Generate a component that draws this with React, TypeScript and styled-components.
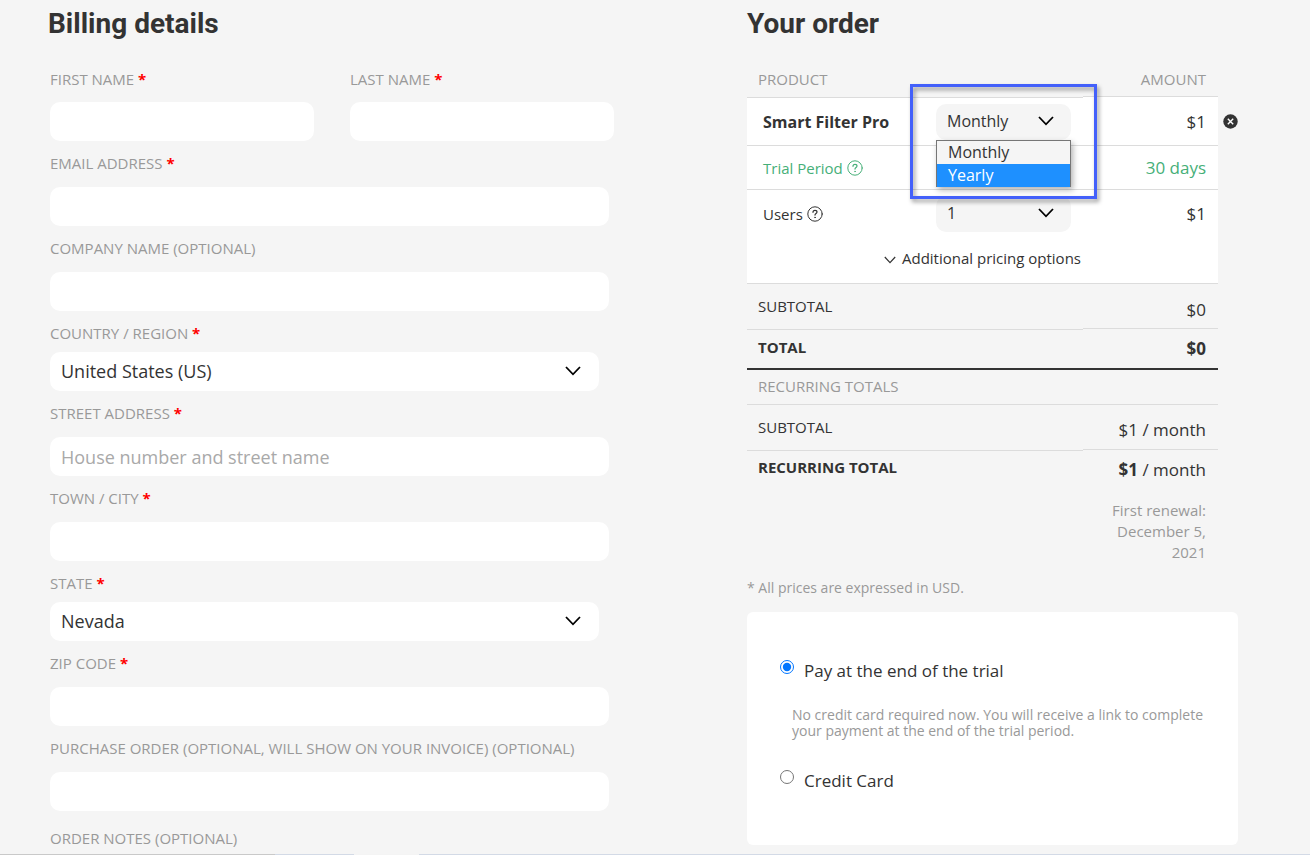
import React, { useState } from "react";
import styled, { createGlobalStyle, css } from "styled-components";

const GlobalStyle = createGlobalStyle`
  *, *::before, *::after { box-sizing: border-box; }
  html { scrollbar-width: none; }
  body {
    margin: 0;
    background: #f5f5f5;
    color: #333;
    font-family: "Open Sans", sans-serif;
    font-size: 17px;
  }
  input, select, textarea, button { font-family: inherit; color: inherit; }
`;

const LINE = "#dcdcdc";
const GREEN = "#46af78";

const Page = styled.form`
  display: grid;
  grid-template-columns: minmax(0, 566fr) minmax(0, 491fr);
  column-gap: 133px;
  padding: 4px 72px 40px 48px;
`;

const Heading = styled.h2`
  margin: 0 0 24px;
  font: 700 28px/39px Roboto, sans-serif;
`;

const Fields = styled.div`
  display: flex;
  flex-direction: column;
  gap: 10px;
  padding-left: 2px;
`;

const NameRow = styled.div`
  display: grid;
  grid-template-columns: 1fr 1fr;
  gap: 36px;
`;

const FieldBox = styled.div<{ $inset?: number; $gap?: number; $before?: number }>`
  display: flex;
  flex-direction: column;
  gap: ${(p) => p.$gap ?? 12}px;
  margin-right: ${(p) => p.$inset ?? 0}px;
  margin-top: ${(p) => p.$before ?? 0}px;
`;

const Label = styled.label`
  color: #999;
  font-size: 15px;
  line-height: 24px;
  text-transform: uppercase;
`;

const Required = styled.abbr`
  color: #f00;
  font-weight: 700;
  text-decoration: none;
`;

const control = css`
  display: block;
  width: 100%;
  height: 39px;
  padding: 0 11px;
  border: 0;
  border-radius: 10px;
  background: #fff;
  font-size: 18px;
  outline: none;
`;

const TextInput = styled.input`
  ${control}
  &::placeholder { color: #a9a9a9; opacity: 1; }
`;

const Notes = styled.textarea`
  ${control}
  height: 80px;
  resize: none;
`;

const SelectWrap = styled.div<{ $arrow: number }>`
  position: relative;
  > svg {
    position: absolute;
    right: ${(p) => p.$arrow}px;
    top: 50%;
    margin-top: -6px;
    pointer-events: none;
  }
`;

const Select = styled.select`
  ${control}
  padding-bottom: 2px;
  appearance: none;
`;

const SmallSelect = styled(Select)`
  height: 36px;
  background: #f5f5f5;
  font-size: 16px;
`;

const Chevron = () => (
  <svg width="16" height="10" viewBox="0 0 16 10" fill="none" stroke="#000" strokeWidth="1.8">
    <path d="M1 1l7 7.3L15 1" />
  </svg>
);

const HelpIcon = () => (
  <svg width="16" height="16" viewBox="0 0 16 16" fill="none" stroke="currentColor" strokeLinecap="round">
    <circle cx="8" cy="8" r="7.2" strokeWidth="1" />
    <path d="M6 6.3c0-1.2.8-1.9 2-1.9s2 .7 2 1.7c0 1.4-2 1.5-2 3" strokeWidth="1.2" />
    <circle cx="8" cy="11.4" r=".5" fill="currentColor" strokeWidth=".5" />
  </svg>
);

const Order = styled.table`
  width: calc(100% - 20px);
  table-layout: fixed;
  border-collapse: separate;
  border-spacing: 0;
`;

const Cell = styled.td<{ $h: number; $top: number; $line?: "thin" | "thick" | "raised" | "raisedWhite" }>`
  height: ${(p) => p.$h}px;
  padding: ${(p) => p.$top}px 0 0 11px;
  line-height: 24px;
  vertical-align: top;
  text-align: left;
  font-weight: 400;
  ${(p) => p.$line === "thin" && css`border-bottom: 1px solid ${LINE};`}
  ${(p) => p.$line === "thick" && css`border-bottom: 2px solid #333;`}
  ${(p) =>
    (p.$line === "raised" || p.$line === "raisedWhite") &&
    css`
      border-bottom: 1px solid ${p.$line === "raised" ? "#f5f5f5" : "#fff"};
      box-shadow: inset 0 -1px ${LINE};
    `}
`;

const Caption = styled(Cell)<{ $muted?: boolean; $bold?: boolean }>`
  color: ${(p) => (p.$muted ? "#999" : "#333")};
  font-weight: ${(p) => (p.$bold ? 700 : 400)};
  font-size: 15px;
  text-transform: uppercase;
`;

const Amount = styled(Cell)<{ $green?: boolean; $small?: boolean }>`
  position: relative;
  padding-left: 0;
  padding-right: 12px;
  text-align: right;
  color: ${(p) => (p.$small ? "#999" : p.$green ? GREEN : "#333")};
  font-size: ${(p) => (p.$small ? 15 : 17)}px;
`;

const ItemBody = styled.tbody`
  background: #fff;
`;

const ItemName = styled(Cell)<{ $green?: boolean; $bold?: boolean }>`
  padding-left: 16px;
  color: ${(p) => (p.$green ? GREEN : "#333")};
  font-size: ${(p) => (p.$bold ? 16 : 15)}px;
  font-weight: ${(p) => (p.$bold ? 700 : 400)};
`;

const WithIcon = styled.span`
  display: inline-flex;
  align-items: center;
  gap: 4px;
`;

const Choice = styled(Cell)`
  position: relative;
  padding-left: 0;
  padding-right: 12px;
`;

const Options = styled.ul`
  position: absolute;
  z-index: 2;
  left: 0;
  right: 12px;
  top: 42px;
  margin: 0;
  padding: 0;
  list-style: none;
  border: 1px solid #767676;
  border-bottom: 0;
  background: #f5f5f5;
  font-size: 16px;
  box-shadow: 2px 3px 6px rgba(0, 0, 0, 0.3);
`;

const Option = styled.li<{ $active?: boolean }>`
  padding-left: 11px;
  line-height: 23px;
  ${(p) => p.$active && css`background: #1e90ff; color: #fff;`}
`;

const Highlight = styled.div`
  position: absolute;
  z-index: 3;
  left: -26px;
  right: -14px;
  top: -14px;
  height: 115px;
  border: 3px solid #4360fa;
  filter: drop-shadow(2px 3px 2px rgba(0, 0, 0, 0.4));
  pointer-events: none;
`;

const Remove = styled.button`
  position: absolute;
  right: -20px;
  top: 16px;
  width: 15px;
  height: 15px;
  padding: 0;
  border: 0;
  background: none;
  cursor: pointer;
  svg { display: block; }
`;

const MoreCell = styled(Cell)`
  padding-left: 0;
  text-align: center;
`;

const MoreButton = styled.button`
  display: inline-flex;
  align-items: center;
  gap: 6px;
  padding: 0;
  border: 0;
  background: none;
  font-size: 15px;
  line-height: 24px;
  svg { margin-top: 4px; }
`;

const Renewal = styled.small`
  display: block;
  margin-top: 18px;
  color: #999;
  font-size: 15px;
  line-height: 21px;
`;

const PriceNote = styled.p`
  margin: 10px 0 12px;
  color: #999;
  font-size: 14px;
  line-height: 24px;
`;

const Payment = styled.div`
  padding: 47px 33px 52px;
  border-radius: 6px;
  background: #fff;
`;

const RadioRow = styled.label`
  display: flex;
  align-items: flex-start;
  gap: 10px;
  line-height: 24px;
  input { margin: 1px 0 0; width: 14px; height: 14px; accent-color: #0075ff; }
`;

const PayNote = styled.p`
  margin: 24px 0 30px 12px;
  color: #999;
  font-size: 14px;
  line-height: 16px;
`;

const Edge = styled.div`
  position: fixed;
  left: 0;
  right: 0;
  bottom: 0;
  height: 1px;
  background: linear-gradient(90deg, #c9c9c9 0 21%, #d3dae6 21% 27%, #f4f4f4 27% 32%, #d3dae6 32%);
`;

type FieldProps = {
  id: string;
  label: string;
  required?: boolean;
  inset?: number;
  gap?: number;
  placeholder?: string;
};

function FieldLabel({ id, label, required }: FieldProps) {
  return (
    <Label htmlFor={id}>
      {label} {required && <Required>*</Required>}
    </Label>
  );
}

function TextField(props: FieldProps) {
  return (
    <FieldBox $inset={props.inset ?? 5} $gap={props.gap}>
      <FieldLabel {...props} />
      <TextInput id={props.id} placeholder={props.placeholder} />
    </FieldBox>
  );
}

function SelectField({ value, ...props }: FieldProps & { value: string }) {
  return (
    <FieldBox $inset={15} $gap={7}>
      <FieldLabel {...props} />
      <SelectWrap $arrow={18}>
        <Select id={props.id} defaultValue={value}>
          <option>{value}</option>
        </Select>
        <Chevron />
      </SelectWrap>
    </FieldBox>
  );
}

export default function App() {
  const [pay, setPay] = useState("trial");
  return (
    <>
      <GlobalStyle />
      <Page>
        <section>
          <Heading>Billing details</Heading>
          <Fields>
            <NameRow>
              <TextField id="first" label="First name" required inset={0} gap={11} />
              <TextField id="last" label="Last name" required inset={0} gap={11} />
            </NameRow>
            <TextField id="email" label="Email address" required />
            <TextField id="company" label="Company name (optional)" />
            <SelectField id="country" label="Country / Region" required value="United States (US)" />
            <TextField id="street" label="Street address" required placeholder="House number and street name" />
            <TextField id="city" label="Town / City" required />
            <SelectField id="state" label="State" required value="Nevada" />
            <TextField id="zip" label="ZIP Code" required />
            <TextField id="po" label="Purchase order (optional, will show on your invoice) (optional)" />
            <FieldBox $inset={5} $before={5}>
              <FieldLabel id="notes" label="Order notes (optional)" />
              <Notes id="notes" />
            </FieldBox>
          </Fields>
        </section>

        <section>
          <Heading>Your order</Heading>
          <Order>
            <colgroup>
              <col />
              <col style={{ width: 147 }} />
              <col style={{ width: 135 }} />
            </colgroup>
            <thead>
              <tr>
                <Caption as="th" colSpan={2} $h={31} $top={0} $line="thin" $muted>Product</Caption>
                <Amount as="th" $h={31} $top={0} $line="raisedWhite" $small>AMOUNT</Amount>
              </tr>
            </thead>
            <ItemBody>
              <tr>
                <ItemName $h={48} $top={12} $line="thin" $bold>Smart Filter Pro</ItemName>
                <Choice $h={48} $top={6} $line="thin">
                  <SelectWrap $arrow={17}>
                    <SmallSelect aria-label="Billing period" defaultValue="Monthly">
                      <option>Monthly</option>
                      <option>Yearly</option>
                    </SmallSelect>
                    <Chevron />
                  </SelectWrap>
                  <Options role="listbox">
                    <Option role="option">Monthly</Option>
                    <Option role="option" $active>Yearly</Option>
                  </Options>
                  <Highlight />
                </Choice>
                <Amount $h={48} $top={12} $line="thin">
                  $1
                  <Remove type="button" aria-label="Remove item">
                    <svg width="15" height="15" viewBox="0 0 15 15">
                      <circle cx="7.5" cy="7.5" r="7.2" fill="#333" />
                      <path d="M4.8 4.8l5.4 5.4M10.2 4.8l-5.4 5.4" stroke="#fff" strokeWidth="1.4" />
                    </svg>
                  </Remove>
                </Amount>
              </tr>
              <tr>
                <ItemName $h={44} $top={10} $line="thin" $green>
                  <WithIcon>Trial Period <HelpIcon /></WithIcon>
                </ItemName>
                <Cell $h={44} $top={10} $line="thin" />
                <Amount $h={44} $top={10} $line="thin" $green>30 days</Amount>
              </tr>
              <tr>
                <ItemName $h={47} $top={12}>
                  <WithIcon>Users <HelpIcon /></WithIcon>
                </ItemName>
                <Choice $h={47} $top={6}>
                  <SelectWrap $arrow={17}>
                    <SmallSelect aria-label="Users" defaultValue="1">
                      <option>1</option>
                    </SmallSelect>
                    <Chevron />
                  </SelectWrap>
                </Choice>
                <Amount $h={47} $top={12}>$1</Amount>
              </tr>
              <tr>
                <MoreCell colSpan={3} $h={47} $top={9} $line="thin">
                  <MoreButton type="button">
                    <svg width="12" height="8" viewBox="0 0 12 8" fill="none" stroke="#333" strokeWidth="1.2">
                      <path d="M.8 1l5.2 5.6L11.2 1" />
                    </svg>
                    Additional pricing options
                  </MoreButton>
                </MoreCell>
              </tr>
            </ItemBody>
            <tbody>
              <tr>
                <Caption as="th" colSpan={2} $h={46} $top={10} $line="thin">Subtotal</Caption>
                <Amount $h={46} $top={14} $line="raised">$0</Amount>
              </tr>
              <tr>
                <Caption as="th" colSpan={2} $h={40} $top={5} $line="thick" $bold>Total</Caption>
                <Amount $h={40} $top={7} $line="thick"><b>$0</b></Amount>
              </tr>
              <tr>
                <Caption as="th" colSpan={3} $h={35} $top={4} $line="thin" $muted>Recurring totals</Caption>
              </tr>
              <tr>
                <Caption as="th" colSpan={2} $h={46} $top={10} $line="thin">Subtotal</Caption>
                <Amount $h={46} $top={13} $line="raised">$1 / month</Amount>
              </tr>
              <tr>
                <Caption as="th" colSpan={2} $h={115} $top={4} $bold>Recurring total</Caption>
                <Amount $h={115} $top={7}>
                  <b>$1</b> / month
                  <Renewal>First renewal: December 5, 2021</Renewal>
                </Amount>
              </tr>
            </tbody>
          </Order>
          <PriceNote>* All prices are expressed in USD.</PriceNote>
          <Payment>
            <RadioRow>
              <input type="radio" name="pay" checked={pay === "trial"} onChange={() => setPay("trial")} />
              <span>Pay at the end of the trial</span>
            </RadioRow>
            <PayNote>
              No credit card required now. You will receive a link to complete your payment at the end of the trial period.
            </PayNote>
            <RadioRow>
              <input type="radio" name="pay" checked={pay === "card"} onChange={() => setPay("card")} />
              <span>Credit Card</span>
            </RadioRow>
          </Payment>
        </section>
      </Page>
      <Edge />
    </>
  );
}
